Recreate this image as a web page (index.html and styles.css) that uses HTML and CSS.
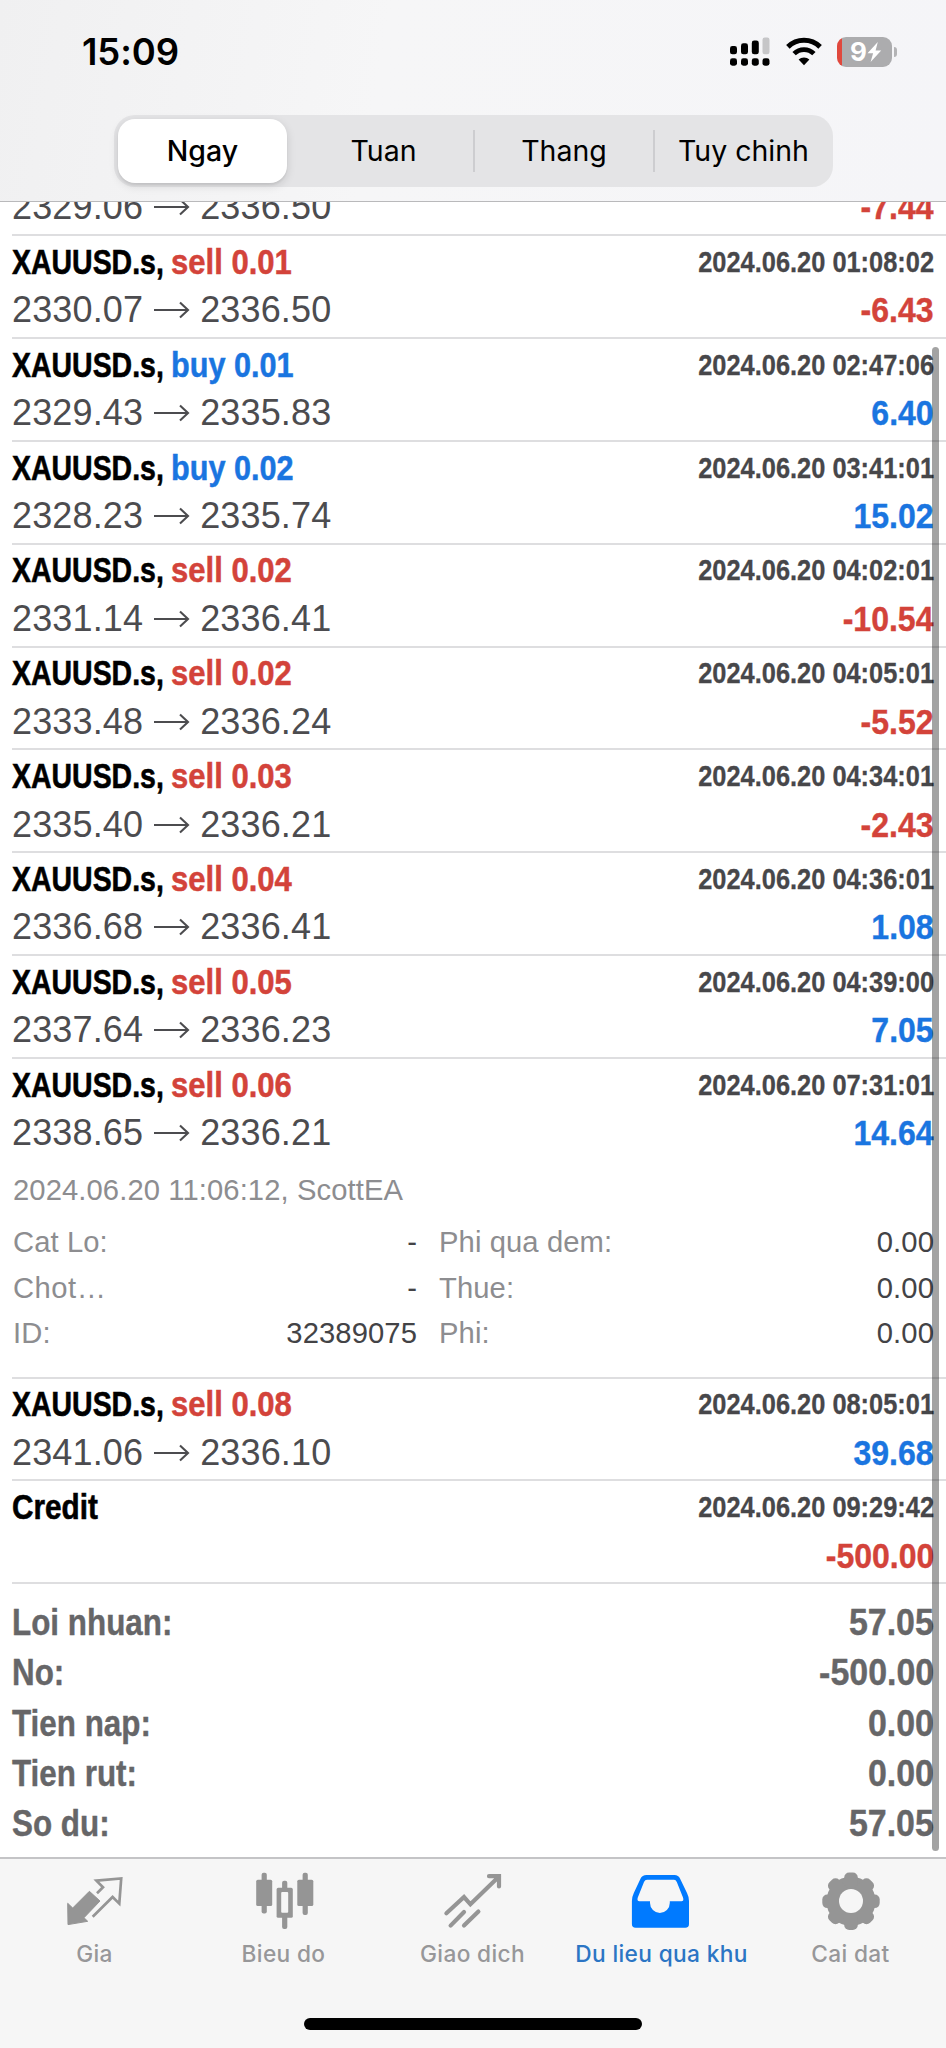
FILE: index.html
```html
<!DOCTYPE html>
<html lang="vi">
<head>
<meta charset="utf-8">
<title>Du lieu qua khu</title>
<link rel="stylesheet" href="styles.css">
</head>
<body>
<div class="screen">
  <header class="header">
    <div class="status">
      <span class="clock">15:09</span>
      <div class="status-icons">
        <svg class="signal" width="40" height="30" viewBox="0 0 40 30">
          <rect x="0" y="9" width="7" height="8.3" rx="2.4"/><rect x="11" y="6.3" width="7" height="11" rx="2.4"/><rect x="21.8" y="3.6" width="7" height="13.7" rx="2.4"/><rect x="32.5" y="0.6" width="7" height="16.7" rx="2.2" fill="#c6c6c8"/>
          <rect x="0" y="21.3" width="7" height="7.4" rx="2.4"/><rect x="11" y="21.3" width="7" height="7.4" rx="2.4"/><rect x="21.8" y="21.3" width="7" height="7.4" rx="2.4"/><rect x="32.5" y="21.3" width="7" height="7.4" rx="2.4"/>
        </svg>
        <svg class="wifi" width="36" height="30" viewBox="0 0 36 30">
          <path d="M1.9 9.9a23 23 0 0 1 32.2 0" fill="none" stroke="#000" stroke-width="5"/>
          <path d="M8.1 16.6a14.2 14.2 0 0 1 19.8 0" fill="none" stroke="#000" stroke-width="4.8"/>
          <path d="M18 28.2l-5.4-5.6a7.8 7.8 0 0 1 10.8 0z"/>
        </svg>
        <div class="battery">
          <span class="battery-level">9</span>
          <svg width="15" height="20" viewBox="0 0 15 20"><path d="M10.8 0L0.5 11.2h5.6L3.6 20 14.2 8.4H8.6z" fill="#fff"/></svg>
        </div>
        <div class="battery-nub"></div>
      </div>
    </div>
    <nav class="segments">
      <span class="segment active">Ngay</span>
      <span class="segment">Tuan</span>
      <span class="segment divided">Thang</span>
      <span class="segment divided">Tuy chinh</span>
    </nav>
  </header>

  <main class="history">
    <div class="rows">
      <section class="row partial"><div class="line"><span class="price">2329.06</span><svg class="arrow" viewBox="0 0 36 18"><path d="M0 9H34M26 1.5L34 9L26 16.5"/></svg><span class="price">2336.50</span><span class="profit sell">-7.44</span></div></section>
      <section class="row"><div class="line"><span class="symbol">XAUUSD.s,</span><span class="side sell">sell 0.01</span><span class="date">2024.06.20 01:08:02</span></div><div class="line"><span class="price">2330.07</span><svg class="arrow" viewBox="0 0 36 18"><path d="M0 9H34M26 1.5L34 9L26 16.5"/></svg><span class="price">2336.50</span><span class="profit sell">-6.43</span></div></section>
      <section class="row"><div class="line"><span class="symbol">XAUUSD.s,</span><span class="side buy">buy 0.01</span><span class="date">2024.06.20 02:47:06</span></div><div class="line"><span class="price">2329.43</span><svg class="arrow" viewBox="0 0 36 18"><path d="M0 9H34M26 1.5L34 9L26 16.5"/></svg><span class="price">2335.83</span><span class="profit buy">6.40</span></div></section>
      <section class="row"><div class="line"><span class="symbol">XAUUSD.s,</span><span class="side buy">buy 0.02</span><span class="date">2024.06.20 03:41:01</span></div><div class="line"><span class="price">2328.23</span><svg class="arrow" viewBox="0 0 36 18"><path d="M0 9H34M26 1.5L34 9L26 16.5"/></svg><span class="price">2335.74</span><span class="profit buy">15.02</span></div></section>
      <section class="row"><div class="line"><span class="symbol">XAUUSD.s,</span><span class="side sell">sell 0.02</span><span class="date">2024.06.20 04:02:01</span></div><div class="line"><span class="price">2331.14</span><svg class="arrow" viewBox="0 0 36 18"><path d="M0 9H34M26 1.5L34 9L26 16.5"/></svg><span class="price">2336.41</span><span class="profit sell">-10.54</span></div></section>
      <section class="row"><div class="line"><span class="symbol">XAUUSD.s,</span><span class="side sell">sell 0.02</span><span class="date">2024.06.20 04:05:01</span></div><div class="line"><span class="price">2333.48</span><svg class="arrow" viewBox="0 0 36 18"><path d="M0 9H34M26 1.5L34 9L26 16.5"/></svg><span class="price">2336.24</span><span class="profit sell">-5.52</span></div></section>
      <section class="row"><div class="line"><span class="symbol">XAUUSD.s,</span><span class="side sell">sell 0.03</span><span class="date">2024.06.20 04:34:01</span></div><div class="line"><span class="price">2335.40</span><svg class="arrow" viewBox="0 0 36 18"><path d="M0 9H34M26 1.5L34 9L26 16.5"/></svg><span class="price">2336.21</span><span class="profit sell">-2.43</span></div></section>
      <section class="row"><div class="line"><span class="symbol">XAUUSD.s,</span><span class="side sell">sell 0.04</span><span class="date">2024.06.20 04:36:01</span></div><div class="line"><span class="price">2336.68</span><svg class="arrow" viewBox="0 0 36 18"><path d="M0 9H34M26 1.5L34 9L26 16.5"/></svg><span class="price">2336.41</span><span class="profit buy">1.08</span></div></section>
      <section class="row"><div class="line"><span class="symbol">XAUUSD.s,</span><span class="side sell">sell 0.05</span><span class="date">2024.06.20 04:39:00</span></div><div class="line"><span class="price">2337.64</span><svg class="arrow" viewBox="0 0 36 18"><path d="M0 9H34M26 1.5L34 9L26 16.5"/></svg><span class="price">2336.23</span><span class="profit buy">7.05</span></div></section>
      <section class="row expanded"><div class="line"><span class="symbol">XAUUSD.s,</span><span class="side sell">sell 0.06</span><span class="date">2024.06.20 07:31:01</span></div><div class="line"><span class="price">2338.65</span><svg class="arrow" viewBox="0 0 36 18"><path d="M0 9H34M26 1.5L34 9L26 16.5"/></svg><span class="price">2336.21</span><span class="profit buy">14.64</span></div>
        <div class="details">
          <div class="comment">2024.06.20 11:06:12, ScottEA</div>
          <div class="fields">
            <div class="field"><span>Cat Lo:</span><b>-</b></div><div class="field"><span>Phi qua dem:</span><b>0.00</b></div>
            <div class="field"><span class="cut">Chot…</span><b>-</b></div><div class="field"><span>Thue:</span><b>0.00</b></div>
            <div class="field"><span>ID:</span><b>32389075</b></div><div class="field"><span>Phi:</span><b>0.00</b></div>
          </div>
        </div>
      </section>
      <section class="row"><div class="line"><span class="symbol">XAUUSD.s,</span><span class="side sell">sell 0.08</span><span class="date">2024.06.20 08:05:01</span></div><div class="line"><span class="price">2341.06</span><svg class="arrow" viewBox="0 0 36 18"><path d="M0 9H34M26 1.5L34 9L26 16.5"/></svg><span class="price">2336.10</span><span class="profit buy">39.68</span></div></section>
      <section class="row"><div class="line"><span class="symbol credit">Credit</span><span class="date">2024.06.20 09:29:42</span></div><div class="line"><span class="profit sell">-500.00</span></div></section>
    </div>
    <div class="summary">
      <div class="total"><span>Loi nhuan:</span><b>57.05</b></div>
      <div class="total"><span>No:</span><b>-500.00</b></div>
      <div class="total"><span>Tien nap:</span><b>0.00</b></div>
      <div class="total"><span>Tien rut:</span><b>0.00</b></div>
      <div class="total"><span>So du:</span><b>57.05</b></div>
    </div>
    <div class="scrollbar"></div>
  </main>

  <footer class="tabbar">
    <div class="tabs">
      <div class="tab">
        <svg viewBox="0 0 60 60"><path d="M2.7 33.3L7.7 38 24.4 21.3 35 31 19 47.7 22.7 51.3 3 54.6z" fill="#959595" stroke="#959595" stroke-width="1" stroke-linejoin="round"/><path d="M32 23.3L38 17.3 31.4 10.7 56.2 8.4 54.3 33.6 47.6 27 27.7 46.7" fill="none" stroke="#959595" stroke-width="2.7"/></svg>
        <span>Gia</span>
      </div>
      <div class="tab">
        <svg viewBox="0 0 60 60" fill="#959595"><rect x="7.6" y="2.7" width="5.2" height="40.8" rx="2"/><rect x="2.2" y="9.7" width="16" height="26.3" rx="1.6"/><rect x="28.1" y="10.7" width="5.2" height="48.3" rx="2"/><rect x="22.6" y="17.8" width="16.2" height="30" rx="1.6"/><rect x="27.2" y="22" width="7" height="20.7" rx="1" fill="#f6f6f6"/><rect x="48.6" y="2.7" width="5.2" height="42.3" rx="2"/><rect x="43.3" y="9.7" width="16" height="26.3" rx="1.6"/></svg>
        <span>Bieu do</span>
      </div>
      <div class="tab">
        <svg viewBox="0 0 60 60" fill="none" stroke="#959595" stroke-width="4.2" stroke-linecap="round"><path d="M3.4 43.3L21 27l6.4 7.3L56 6.4M46 6.2H56V16.4M7.6 55.6L21 42M21 55.6L35.4 41.6"/></svg>
        <span>Giao dich</span>
      </div>
      <div class="tab current">
        <svg viewBox="0 0 60 60"><path fill="#007aff" fill-rule="evenodd" d="M14.5 5H42.5Q46.5 5 48 8.5L55 23Q57 27 57 31V54Q57 57.8 53.3 57.8H3.6Q-.1 57.8 -.1 54V31Q-.1 27 1.8 23L8.6 8.5Q10.2 5 14.5 5zM15 9.7Q13 9.7 12 12L5.8 27.5Q4.6 31.2 7.5 31.2H18V33A9.9 9.9 0 0 0 37.8 33V31.2H49.5Q52.2 31.2 51 27.5L44.8 12Q43.8 9.7 42 9.7z"/></svg>
        <span>Du lieu qua khu</span>
      </div>
      <div class="tab">
        <svg viewBox="0 0 60 60" fill="#959595"><circle cx="30" cy="31.3" r="24.6"/><rect x="23.2" y="2.6" width="13.6" height="57.4" rx="5"/><rect x="23.2" y="2.6" width="13.6" height="57.4" rx="5" transform="rotate(45 30 31.3)"/><rect x="23.2" y="2.6" width="13.6" height="57.4" rx="5" transform="rotate(90 30 31.3)"/><rect x="23.2" y="2.6" width="13.6" height="57.4" rx="5" transform="rotate(135 30 31.3)"/><circle cx="30" cy="31" r="12" fill="#f6f6f6"/></svg>
        <span>Cai dat</span>
      </div>
    </div>
    <div class="home-indicator"></div>
  </footer>
</div>
</body>
</html>
```

FILE: styles.css
```css
* { box-sizing: border-box; }
body { margin: 0; background: #fff; font-family: "Liberation Sans", Arial, sans-serif; }
.screen { width: 946px; height: 2048px; display: flex; flex-direction: column; overflow: hidden; }

.header { flex: none; height: 202px; background: linear-gradient(100deg, #f0f0f1 0%, #f6f6f7 40%, #f5f5f8 100%); border-bottom: 1px solid #b9b9bb; }
.status { height: 115px; display: flex; justify-content: space-between; align-items: flex-start; padding: 31px 49px 0 82px; }
.clock { font: 600 36.5px/42px Inter, sans-serif; letter-spacing: -.1px; }
.status-icons { display: flex; padding-top: 5.5px; }
.wifi { margin-left: 16px; }
.battery { width: 55px; height: 30px; margin-left: 15px; border-radius: 9px; background: linear-gradient(90deg, #e0483d 5px, #acacae 5px); display: flex; align-items: center; padding-left: 13px; color: #fff; }
.battery-level { font: 700 26px/30px Inter, sans-serif; }
.battery-nub { width: 3px; height: 10px; margin: 10px 0 0 2px; border-radius: 0 4px 4px 0; background: #b4b4b6; }

.segments { width: 719px; height: 72px; margin-left: 114px; border-radius: 21px; background: #e4e4e6; display: grid; grid-template-columns: 179px 181px 180px 179px; align-items: center; font: 400 28.5px/64px Inter, sans-serif; text-align: center; }
.segment { position: relative; }
.active { margin: 0 6px 0 4px; height: 64px; border-radius: 17px; background: #fff; font-weight: 500; box-shadow: 0 3px 10px rgba(0,0,0,.13), 0 2px 2px rgba(0,0,0,.06); }
.divided::before { content: ""; position: absolute; left: -1px; top: 11px; width: 2px; height: 42px; background: #cdcdd0; }

.history { flex: 1; min-height: 0; overflow: hidden; position: relative; }
.rows { margin-top: -18.8px; padding-left: 12px; }
.row { height: 102.85px; padding: 1.4px 12px 0 0; border-bottom: 2px solid #dedee0; }
.partial { height: 53px; padding-top: 0; }
.expanded { height: 319.6px; }
.line { height: 48.5px; display: flex; align-items: center; line-height: 48px; white-space: nowrap; }
.symbol, .side, .date, .profit, .total { font-weight: 700; }
.symbol { width: 159px; font-size: 35.8px; transform: scaleX(.795); transform-origin: left; -webkit-text-stroke: .6px #000; }
.credit { transform: scaleX(.83); }
.side { font-size: 35.8px; transform: scaleX(.867); transform-origin: left; -webkit-text-stroke: .5px currentColor; }
.side.buy { transform: scaleX(.855); }
.date { margin-left: auto; font-size: 29.2px; color: #47474a; transform: scaleX(.87); transform-origin: right; -webkit-text-stroke: .3px currentColor; }
.profit { margin-left: auto; font-size: 35.8px; transform: scaleX(.895); transform-origin: right; -webkit-text-stroke: .4px currentColor; }
.sell { color: #d3433a; }
.buy { color: #1a75e0; }
.price { font-size: 36px; letter-spacing: .15px; color: #4c4c4f; }
.arrow { flex: none; width: 36px; height: 18px; margin: 0 10px 0 11px; fill: none; stroke: #4c4c4f; stroke-width: 2.1; }

.details { margin-top: 10.8px; padding-left: 1px; font-size: 29.2px; letter-spacing: .1px; line-height: 45.7px; color: #8d8d90; }
.comment { margin-bottom: 6px; }
.fields { display: grid; grid-template-columns: 404px 1fr; column-gap: 22px; }
.field { display: flex; justify-content: space-between; }
.field b { font-weight: 400; color: #434346; }
.cut { letter-spacing: .5px; }

.summary { padding: 13px 12px 0; font-size: 37.5px; line-height: 50.2px; color: #666668; -webkit-text-stroke: .4px currentColor; }
.total { display: flex; justify-content: space-between; }
.total span { transform: scaleX(.837); transform-origin: left; }
.total b { transform: scaleX(.905); transform-origin: right; }
.scrollbar { position: absolute; left: 932px; top: 145px; width: 7px; height: 1504px; border-radius: 4px; background: rgba(0,0,0,.36); }

.tabbar { flex: none; height: 191px; background: #f6f6f6; border-top: 2px solid #c4c4c6; display: flex; flex-direction: column; align-items: center; }
.tabs { width: 100%; height: 159px; display: grid; grid-template-columns: repeat(5, 1fr); padding: 11px 1px 0 0; }
.tab { display: flex; flex-direction: column; align-items: center; font: 500 22.7px/30px Inter, sans-serif; color: #979799; white-space: nowrap; letter-spacing: .35px; }
.tab svg { width: 60px; height: 60px; margin-bottom: 9px; overflow: visible; }
.current { color: #2b75c4; }
.home-indicator { width: 338px; height: 12px; border-radius: 6px; background: #000; }
```
